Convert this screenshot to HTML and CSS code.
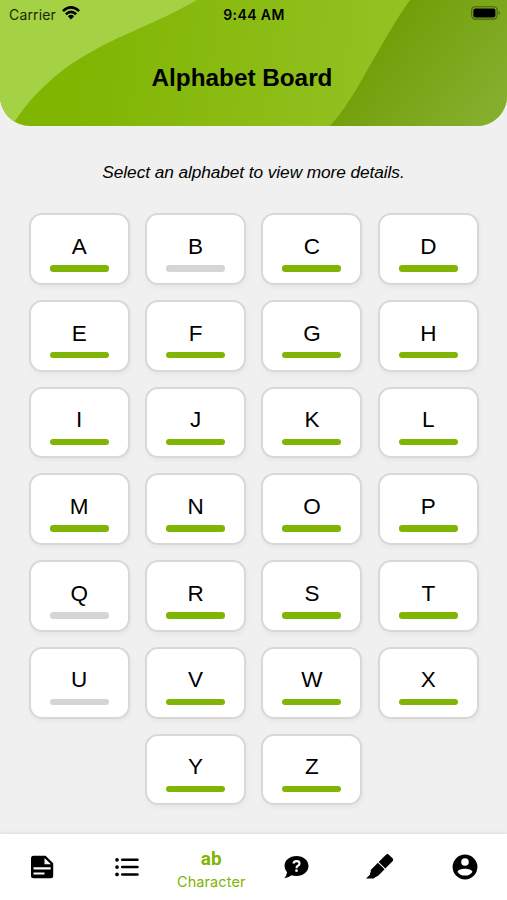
FILE: index.html
```html
<!DOCTYPE html>
<html lang="en">
<head>
<meta charset="utf-8">
<title>Alphabet Board</title>
<link rel="stylesheet" href="styles.css">
</head>
<body>
<header class="header">
  <svg class="header-art" viewBox="0 0 507 126" preserveAspectRatio="none" aria-hidden="true">
    <defs>
      <linearGradient id="mid" gradientUnits="userSpaceOnUse" x1="80" y1="60" x2="400" y2="100">
        <stop offset="0" stop-color="#80b502"/><stop offset="1" stop-color="#94c224"/>
      </linearGradient>
      <linearGradient id="dark" gradientUnits="userSpaceOnUse" x1="375" y1="45" x2="475" y2="125">
        <stop offset="0" stop-color="#719f08"/><stop offset="1" stop-color="#84ae2c"/>
      </linearGradient>
    </defs>
    <path fill="url(#mid)" d="M0 0H507V126H0Z"/>
    <path fill="#a5d144" d="M0 0H197C181 9 165 17 147 25C106 43 75 58 50 81C35 94 25 106 15 121L11 126H0Z"/>
    <path fill="url(#dark)" d="M410 0H507V126H330C352 101 362 78 376 55C387 36 397 18 410 0Z"/>
  </svg>
  <div class="status">
    <div class="carrier">
      <span>Carrier</span>
      <svg class="wifi" viewBox="0 0 18 14" aria-hidden="true">
        <path fill="none" stroke="#000" stroke-width="2.5" d="M.9 5.100Q9-2.400 17.100 5.100M3.800 8.200Q9 3.500 14.200 8.200"/>
        <path d="M9 13.400L5.800 10.200Q9 7.500 12.200 10.200Z"/>
      </svg>
    </div>
    <time class="clock">9:44 AM</time>
    <svg class="battery" viewBox="0 0 30 14" aria-hidden="true">
      <rect x=".7" y=".7" width="25.4" height="12.4" rx="3.6" fill="none" stroke="#000" stroke-opacity=".42" stroke-width="1.1"/>
      <rect x="2.4" y="2.4" width="22" height="9" rx="2"/>
      <path fill-opacity=".45" d="M27.700 4.800Q30 6.900 27.700 9Z"/>
    </svg>
  </div>
  <h1 class="title">Alphabet Board</h1>
</header>
<main class="main">
  <p class="hint">Select an alphabet to view more details.</p>
  <div class="board">
    <div class="card">A</div><div class="card todo">B</div><div class="card">C</div><div class="card">D</div>
    <div class="card">E</div><div class="card">F</div><div class="card">G</div><div class="card">H</div>
    <div class="card">I</div><div class="card">J</div><div class="card">K</div><div class="card">L</div>
    <div class="card">M</div><div class="card">N</div><div class="card">O</div><div class="card">P</div>
    <div class="card todo">Q</div><div class="card">R</div><div class="card">S</div><div class="card">T</div>
    <div class="card todo">U</div><div class="card">V</div><div class="card">W</div><div class="card">X</div>
    <div class="card">Y</div><div class="card">Z</div>
  </div>
</main>
<nav class="tabs">
  <div class="tab">
    <svg class="icon" viewBox="0 0 28 28" aria-hidden="true">
      <path fill-rule="evenodd" d="M5.500 2.800H17.600L25.200 10.200V22.700Q25.200 25.200 22.700 25.200H5.500Q3 25.200 3 22.700V5.300Q3 2.800 5.500 2.800ZM16.500 5V11.200H22.900ZM5.500 14.200V16.400H22.700V14.200ZM5.500 19.400V21.600H16.500V19.400Z"/>
    </svg>
  </div>
  <div class="tab">
    <svg class="icon" viewBox="0 0 28 28" aria-hidden="true">
      <g fill="none" stroke="#000" stroke-linecap="round"><path stroke-width="2.500" d="M9.200 6.800H24.500M9.200 14.100H24.500M9.200 21.400H24.500"/><path stroke-width="3.700" d="M4 6.800h.01M4 14.100h.01M4 21.400h.01"/></g>
    </svg>
  </div>
  <div class="tab active">
    <span class="ab">ab</span>
    <span class="label">Character</span>
  </div>
  <div class="tab">
    <svg class="icon" viewBox="0 0 28 28" aria-hidden="true">
      <path d="M14.500 3C21.400 3 26.500 7.400 26.500 13S21.400 23 14.500 23Q11.800 23 9.500 22.200Q6.500 24.800 2.200 25.200Q4.500 22.800 5.100 19.500Q2.500 16.700 2.500 13C2.500 7.400 7.600 3 14.500 3Z"/>
      <path fill="none" stroke="#fff" stroke-width="2.100" d="M11.400 10.500Q11.900 8.100 14.500 8.100Q17.500 8.100 17.500 10.500Q17.500 12 15.900 12.800Q14.500 13.500 14.500 15.200"/>
      <circle cx="14.500" cy="17.700" r="1.350" fill="#fff"/>
    </svg>
  </div>
  <div class="tab">
    <svg class="icon" viewBox="0 0 28 28" aria-hidden="true">
      <path d="M20.200 1.400Q21.400.5 22.600 1.400L26.800 5.600Q27.700 6.800 26.800 8L19.300 15.600L12.700 8.900ZM11.900 9.700L18.600 16.300L12.200 22.700L9.200 24.300L7.800 25.500H0L4.100 21.400Q3.600 20.500 4.700 19V17Z"/>
    </svg>
  </div>
  <div class="tab">
    <svg class="icon" viewBox="0 0 28 28" aria-hidden="true">
      <path fill-rule="evenodd" d="M14 1.600A12.400 12.400 0 1 0 14 26.400A12.400 12.400 0 1 0 14 1.600ZM14 5.200A3.800 3.800 0 1 1 14 12.800A3.800 3.800 0 1 1 14 5.200ZM14 22.600Q9 22.600 6.600 18.900C7.200 14.800 20.800 14.800 21.400 18.900Q19 22.600 14 22.600Z"/>
    </svg>
  </div>
</nav>
</body>
</html>
```
FILE: styles.css
```css
* { box-sizing: border-box; }

body {
  margin: 0;
  height: 900px;
  display: flex;
  flex-direction: column;
  overflow: hidden;
  background: #f0f0f0;
  color: #000;
  font-family: "Liberation Sans", sans-serif;
}

.header {
  position: relative;
  height: 126px;
  flex: none;
  overflow: hidden;
  border-radius: 0 0 30px 30px;
}

.header-art {
  position: absolute;
  inset: 0;
  width: 100%;
  height: 100%;
}

.status {
  position: relative;
  height: 28px;
  display: grid;
  grid-template-columns: 1fr auto 1fr;
  align-items: center;
  padding: 0 6px 0 9px;
  font-family: Inter, sans-serif;
  font-size: 14px;
}

.carrier {
  display: flex;
  align-items: center;
  gap: 6px;
  letter-spacing: 0.15px;
  color: #1c2606;
}

.wifi { width: 18px; height: 14px; margin-top: -2px; }
.clock { margin-left: -2px; font-weight: 600; letter-spacing: 0.400px; }
.battery { width: 30px; height: 14px; justify-self: end; margin-top: -2px; }

.title {
  position: relative;
  margin: 34.500px 0 0;
  padding-right: 23px;
  text-align: center;
  font-size: 24.300px;
  line-height: 30px;
}

.main {
  flex: 1;
  min-height: 0;
}

.hint {
  margin: 36px 0 0;
  text-align: center;
  font-size: 17.300px;
  line-height: 20px;
  letter-spacing: -0.080px;
  font-style: italic;
}

.board {
  display: flex;
  flex-wrap: wrap;
  justify-content: center;
  gap: 15px 15.400px;
  width: 451px;
  margin: 31.400px auto 0;
  padding-left: 0.500px;
  box-sizing: content-box;
}

.card {
  width: 101px;
  height: 71.700px;
  display: flex;
  flex-direction: column;
  align-items: center;
  padding-top: 17.500px;
  border: 2px solid #d8d8d8;
  border-radius: 13px;
  background: #fff;
  box-shadow: 1px 3px 5px rgba(0, 0, 0, 0.04);
  font-size: 22.500px;
  line-height: 28px;
}

.card::after {
  content: "";
  width: 59px;
  height: 6.400px;
  margin-top: 4.500px;
  border-radius: 3.200px;
  background: #80b405;
}

.card.todo::after { background: #d5d5d5; }

.tabs {
  height: 66px;
  flex: none;
  display: grid;
  grid-template-columns: repeat(6, 1fr);
  background: #fff;
  box-shadow: 0 -1px 3px rgba(0, 0, 0, 0.09);
}

.tab {
  display: flex;
  flex-direction: column;
  align-items: center;
  justify-content: center;
}

.icon { width: 28px; height: 28px; }

.active {
  justify-content: flex-start;
  padding-top: 13px;
  color: #80b405;
}

.ab {
  font: bold 19px/24px Roboto, sans-serif;
}

.label {
  margin-top: 2px;
  font: 14.500px/18px Inter, sans-serif;
  letter-spacing: 0.100px;
}
```
